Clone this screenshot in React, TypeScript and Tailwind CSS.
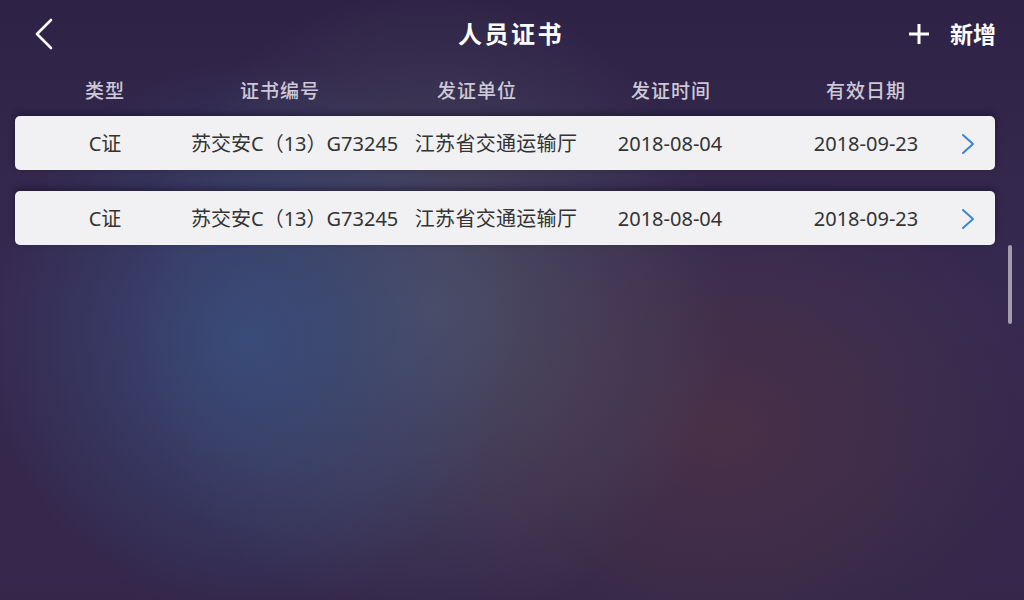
const rows = [
  { type: "C证", no: "苏交安C（13）G73245", org: "江苏省交通运输厅", issued: "2018-08-04", expires: "2018-09-23" },
  { type: "C证", no: "苏交安C（13）G73245", org: "江苏省交通运输厅", issued: "2018-08-04", expires: "2018-09-23" },
];

const cols = ["类型", "证书编号", "发证单位", "发证时间", "有效日期"];

function App() {
  return (
    <div
      className="relative w-[1024px] h-[600px] overflow-hidden font-['Noto_Sans','Noto_Sans_CJK_SC',sans-serif] bg-[#33274b] bg-[radial-gradient(ellipse_260px_280px_at_250px_340px,rgba(56,76,122,0.95),transparent),radial-gradient(ellipse_300px_320px_at_430px_310px,rgba(80,82,102,0.9),transparent),radial-gradient(ellipse_320px_260px_at_720px_430px,rgba(76,50,70,0.85),transparent),linear-gradient(180deg,#2e2346_0%,#372a51_50%,#34274a_100%)]"
    >
      {/* top bar */}
      <div className="flex items-center h-[68px] pl-[34px] pr-[28px]">
        <button className="w-[24px] h-[34px] flex items-center">
          <svg width="20" height="32" viewBox="0 0 20 32" fill="none">
            <path d="M17 2 L3 16 L17 30" stroke="white" strokeWidth="2.6" strokeLinecap="round" strokeLinejoin="round" />
          </svg>
        </button>
        <div className="flex-1 text-center text-white text-[24px] font-bold tracking-[2.5px] pl-[56px]">人员证书</div>
        <div className="flex items-center gap-[20px]">
          <svg width="22" height="22" viewBox="0 0 22 22">
            <path d="M11 1 V21 M1 11 H21" stroke="white" strokeWidth="3" />
          </svg>
          <span className="text-white text-[23px] font-bold">新增</span>
        </div>
      </div>

      {/* column headers */}
      <div className="grid grid-cols-[210px_140px_254px_134px_256px] h-[46px] items-center text-[19px] text-[#cdc8d6] font-medium tracking-[1px]">
        {cols.map((c) => (
          <div key={c} className="text-center">{c}</div>
        ))}
      </div>

      {/* list */}
      <div className="flex flex-col gap-[21px] mt-[2px] pl-[15px] pr-[29px]">
        {rows.map((r, i) => (
          <div
            key={i}
            className="grid grid-cols-[176px_194px_222px_126px_222px_1fr] items-center h-[54px] pt-[2px] rounded-[5px] bg-[#f1f1f3] text-[20px] text-[#333333] shadow-[0_-3px_6px_rgba(20,10,40,0.45)]"
          >
            <div className="text-center pl-[4px]">{r.type}</div>
            <div className="text-center whitespace-nowrap">{r.no}</div>
            <div className="text-center whitespace-nowrap tracking-[0.3px]">{r.org}</div>
            <div className="text-center">{r.issued}</div>
            <div className="text-center pl-[44px]">{r.expires}</div>
            <div className="flex items-center pl-[6px]">
              <svg width="14" height="22" viewBox="0 0 14 22" fill="none">
                <path d="M2 2 L12 11 L2 20" stroke="#3a86d2" strokeWidth="2" strokeLinecap="round" strokeLinejoin="round" />
              </svg>
            </div>
          </div>
        ))}
      </div>

      {/* scrollbar */}
      <div className="absolute left-[1008px] top-[245px] w-[4px] h-[79px] rounded-full bg-[#a39daf]" />
    </div>
  );
}

export default App;
